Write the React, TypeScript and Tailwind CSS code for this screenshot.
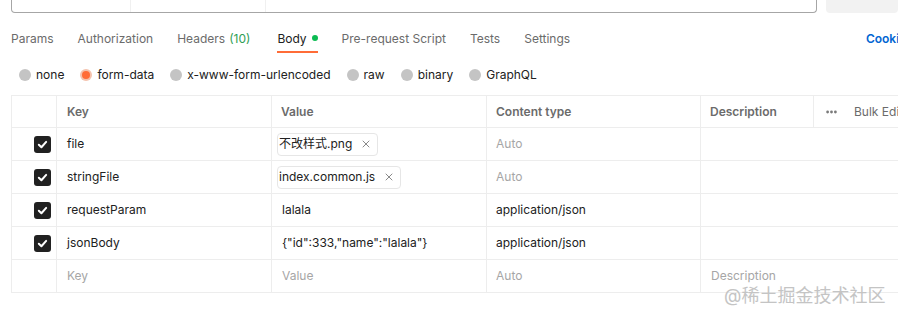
import { X } from 'lucide-react'

type Row = {
  key: string
  value: string
  file?: boolean
  contentType: string
  auto?: boolean
}

const ROWS: Row[] = [
  { key: 'file', value: '不改样式.png', file: true, contentType: 'Auto', auto: true },
  { key: 'stringFile', value: 'index.common.js', file: true, contentType: 'Auto', auto: true },
  { key: 'requestParam', value: 'lalala', contentType: 'application/json' },
  { key: 'jsonBody', value: '{"id":333,"name":"lalala"}', contentType: 'application/json' },
]

const TABS = ['Params', 'Authorization', 'Headers', 'Body', 'Pre-request Script', 'Tests', 'Settings']
const BODY_TYPES = ['none', 'form-data', 'x-www-form-urlencoded', 'raw', 'binary', 'GraphQL']

function Checkbox() {
  return (
    <span className="flex h-[17px] w-[17px] items-center justify-center rounded-[3px] bg-[#212121]">
      <svg width="11" height="11" viewBox="0 0 12 12" fill="none">
        <path d="M2 6.3 4.8 9 10 3.2" stroke="#fff" strokeWidth="2.2" strokeLinecap="round" strokeLinejoin="round" />
      </svg>
    </span>
  )
}

function FileChip({ name }: { name: string }) {
  return (
    <span className="flex h-[23px] items-center gap-[8px] rounded-[4px] border border-[#e6e6e6] pl-[1px] pr-[5px] text-[#212121]">
      {name}
      <X size={12} strokeWidth={1.6} className="text-[#6b6b6b]" />
    </span>
  )
}

export default function App() {
  return (
    <div
      className="relative h-[319px] w-[898px] overflow-hidden bg-white text-[12px]"
      style={{ fontFamily: 'Inter, "Noto Sans CJK SC", sans-serif' }}
    >
      {/* url bar */}
      <div className="flex h-[13px] items-end gap-[9px] pl-[11px]">
        <div className="-mt-[17px] flex h-[30px] w-[806px] shrink-0 rounded-b-[4px] border border-t-0 border-[#a6a6a6]">
          <div className="w-[119px] border-r border-[#f0f0f0]" />
          <div className="w-[135px] border-r border-[#f0f0f0]" />
        </div>
        <div className="-mt-[17px] h-[30px] flex-1 rounded-b-[4px] bg-[#f2f2f2]" />
      </div>

      {/* tabs */}
      <div className="mt-[13px] flex h-[27px] items-start pl-[11px]">
        {TABS.map(tab => {
          const active = tab === 'Body'
          return (
            <div
              key={tab}
              className={`flex h-[27px] items-start border-b-2 pt-[4px] ${
                tab === 'Headers' ? 'mr-[27px]' : 'mr-[24px]'
              } ${active ? 'border-[#ff6c37] text-[#212121]' : 'border-transparent text-[#6b6b6b]'}`}
            >
              {tab}
              {tab === 'Headers' && <span className="ml-[4px] text-[#2f9e54]">(10)</span>}
              {active && <span className="ml-[5px] mt-[5px] h-[6px] w-[6px] rounded-full bg-[#0cbb52]" />}
            </div>
          )
        })}
        <div className="ml-auto mr-[-15px] pt-[4px] font-semibold text-[#0265d2]">Cookies</div>
      </div>

      {/* body types */}
      <div className="mt-[14px] flex h-[15px] items-center pl-[19px]">
        {BODY_TYPES.map(t => (
          <div key={t} className="mr-[16px] flex items-center gap-[5px] text-[#212121]">
            {t === 'form-data' ? (
              <span className="flex h-[12px] w-[12px] items-center justify-center rounded-full bg-[#f4c2ad]">
                <span className="h-[8px] w-[8px] rounded-full bg-[#ff6c37]" />
              </span>
            ) : (
              <span className="h-[12px] w-[12px] rounded-full bg-[#c4c4c4]" />
            )}
            {t}
          </div>
        ))}
      </div>

      {/* form data table */}
      <div className="ml-[11px] mt-[13px] w-[1000px] border-l border-t border-[#ededed]">
        <div className="grid h-[32px] grid-cols-[45px_215px_215px_214px_113px_1fr] border-b border-[#ededed] font-semibold text-[#6b6b6b]">
          <div className="border-r border-[#ededed]" />
          <div className="flex items-center border-r border-[#ededed] pl-[10px]">Key</div>
          <div className="flex items-center border-r border-[#ededed] pl-[9px]">Value</div>
          <div className="flex items-center border-r border-[#ededed] pl-[9px]">Content type</div>
          <div className="flex items-center border-r border-[#ededed] pl-[9px]">Description</div>
          <div className="flex items-center pl-[12px] font-normal">
            <svg width="11" height="4" viewBox="0 0 11 4" className="mr-[17px]">
              <circle cx="1.6" cy="2" r="1.4" fill="#7a7a7a" />
              <circle cx="5.5" cy="2" r="1.4" fill="#7a7a7a" />
              <circle cx="9.4" cy="2" r="1.4" fill="#7a7a7a" />
            </svg>
            <span className="text-[#6b6b6b]">Bulk Edit</span>
          </div>
        </div>
        {ROWS.map(row => (
          <div
            key={row.key}
            className="grid h-[33px] grid-cols-[45px_215px_215px_214px_1fr] border-b border-[#ededed] text-[#212121]"
          >
            <div className="flex items-center justify-end border-r border-[#ededed] pr-[5px]">
              <Checkbox />
            </div>
            <div className="flex items-center border-r border-[#ededed] pl-[10px]">{row.key}</div>
            <div className="flex items-center border-r border-[#ededed] pl-[5px]">
              {row.file ? <FileChip name={row.value} /> : <span className="pl-[5px]">{row.value}</span>}
            </div>
            <div
              className={`flex items-center border-r border-[#ededed] pl-[9px] ${
                row.auto ? 'text-[#a6a6a6]' : ''
              }`}
            >
              {row.contentType}
            </div>
            <div />
          </div>
        ))}
        <div className="grid h-[33px] grid-cols-[45px_215px_215px_214px_1fr] border-b border-[#ededed] text-[#a6a6a6]">
          <div className="border-r border-[#ededed]" />
          <div className="flex items-center border-r border-[#ededed] pl-[10px]">Key</div>
          <div className="flex items-center border-r border-[#ededed] pl-[10px]">Value</div>
          <div className="flex items-center border-r border-[#ededed] pl-[9px]">Auto</div>
          <div className="flex items-center pl-[10px]">Description</div>
        </div>
      </div>

      {/* watermark */}
      <div className="absolute left-[724px] top-[285px] text-[18px] leading-[22px] text-[#c4c4c4]">
        @稀土掘金技术社区
      </div>
    </div>
  )
}
